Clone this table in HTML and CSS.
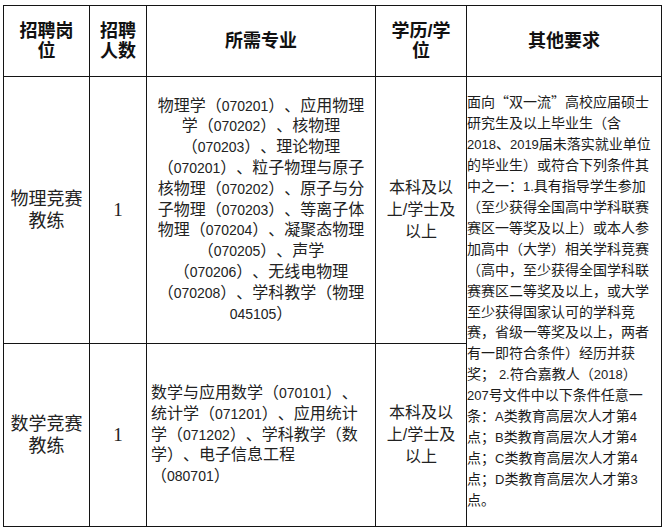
FILE: index.html
```html
<!DOCTYPE html>
<html lang="zh-CN">
<head>
<meta charset="utf-8">
<title>招聘岗位</title>
<link rel="stylesheet" href="styles.css">
</head>
<body>
<table class="jobs">
  <colgroup>
    <col class="c-post">
    <col class="c-num">
    <col class="c-major">
    <col class="c-degree">
    <col class="c-other">
  </colgroup>
  <thead>
    <tr class="head-row">
      <th>招聘岗<br>位</th>
      <th>招聘<br>人数</th>
      <th>所需专业</th>
      <th>学历/学<br>位</th>
      <th>其他要求</th>
    </tr>
  </thead>
  <tbody>
    <tr class="row-a">
      <td class="post">物理竞赛<br>教练</td>
      <td class="count">1</td>
      <td class="major center">物理学（<span class="n">070201</span>）、应用物理<br>学（<span class="n">070202</span>）、核物理<br>（<span class="n">070203</span>）、理论物理<br>（<span class="n">070201</span>）、粒子物理与原子<br>核物理（<span class="n">070202</span>）、原子与分<br>子物理（<span class="n">070203</span>）、等离子体<br>物理（<span class="n">070204</span>）、凝聚态物理<br>（<span class="n">070205</span>）、声学<br>（<span class="n">070206</span>）、无线电物理<br>（<span class="n">070208</span>）、学科教学（物理<br><span class="n">045105</span>）</td>
      <td class="degree">本科及以<br>上/学士及<br>以上</td>
      <td class="other" rowspan="2">面向<span class="q">“</span>双一流<span class="q">”</span>高校应届硕士<br>研究生及以上毕业生（含<br><span class="n">2018</span>、<span class="n">2019</span>届未落实就业单位<br>的毕业生）或符合下列条件其<br>中之一：<span class="n">1.</span>具有指导学生参加<br>（至少获得全国高中学科联赛<br>赛区一等奖及以上）或本人参<br>加高中（大学）相关学科竞赛<br>（高中，至少获得全国学科联<br>赛赛区二等奖及以上，或大学<br>至少获得国家认可的学科竞<br>赛，省级一等奖及以上，两者<br>有一即符合条件）经历并获<br>奖； <span class="n">2.</span>符合嘉教人（<span class="n">2018</span>）<br><span class="n">207</span>号文件中以下条件任意一<br>条：<span class="n">A</span>类教育高层次人才第<span class="n">4</span><br>点；<span class="n">B</span>类教育高层次人才第<span class="n">4</span><br>点；<span class="n">C</span>类教育高层次人才第<span class="n">4</span><br>点；<span class="n">D</span>类教育高层次人才第<span class="n">3</span><br>点。</td>
    </tr>
    <tr class="row-b">
      <td class="post">数学竞赛<br>教练</td>
      <td class="count">1</td>
      <td class="major left">数学与应用数学（<span class="n">070101</span>）、<br>统计学（<span class="n">071201</span>）、应用统计<br>学（<span class="n">071202</span>）、学科教学（数<br>学）、电子信息工程<br>（<span class="n">080701</span>）</td>
      <td class="degree">本科及以<br>上/学士及<br>以上</td>
    </tr>
  </tbody>
</table>
</body>
</html>
```

FILE: styles.css
```css
html, body {
  background: #ffffff;
}
body {
  margin: 5px 0 0 3px;
  font-family: "Liberation Sans", "Noto Sans CJK SC", sans-serif;
  color: #1c1c1c;
  text-spacing-trim: space-all;
}
.jobs {
  border-collapse: collapse;
  table-layout: fixed;
  width: 658px;
}
.c-post { width: 86px; }
.c-num { width: 57px; }
.c-major { width: 229px; }
.c-degree { width: 91px; }
.c-other { width: 195px; }

.jobs th, .jobs td {
  border: 1px solid #141414;
  padding: 0;
  vertical-align: middle;
  white-space: nowrap;
  overflow: hidden;
}
.head-row { height: 71px; }
.row-a { height: 267px; }
.row-b { height: 183px; }

.jobs th {
  font-size: 18px;
  line-height: 20px;
  font-weight: 700;
  color: #111111;
  text-align: center;
}
.post {
  font-size: 18px;
  line-height: 22px;
  text-align: center;
  color: #222222;
}
.count {
  font-family: "Liberation Serif", serif;
  font-size: 19px;
  text-align: center;
  color: #222222;
}
.major {
  font-size: 16px;
  line-height: 20.8px;
  color: #222222;
}
.major.center { text-align: center; }
.major.left { text-align: left; padding-left: 4px; }
.degree {
  font-size: 16px;
  line-height: 22px;
  text-align: center;
  color: #222222;
}
.other {
  font-size: 14px;
  line-height: 20.9px;
  text-align: left;
  padding: 3px 2px 0 4px;
  color: #1c1c1c;
}
.n {
  font-size: 13px;
  line-height: 1;
}
.major .n {
  font-size: 14px;
}
.q {
  font-family: "Noto Sans CJK SC", sans-serif;
  line-height: 1;
}
```
